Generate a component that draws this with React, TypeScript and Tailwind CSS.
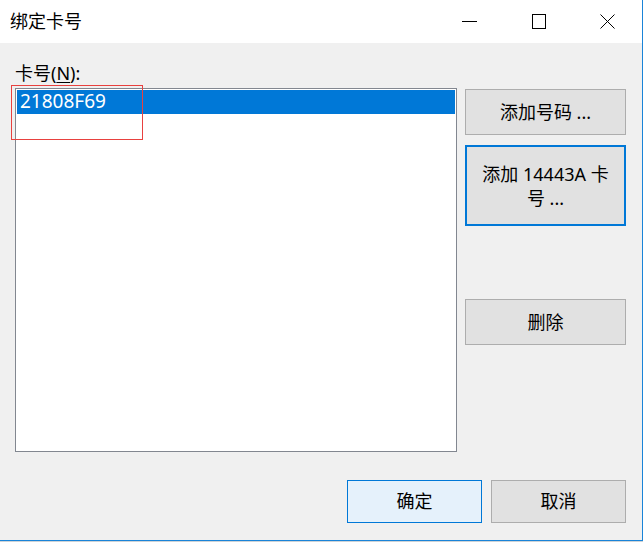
import React from 'react';

const font = "font-['Noto_Sans','Noto_Sans_CJK_SC',sans-serif]";

function CaptionButton({ kind }: { kind: 'min' | 'max' | 'close' }) {
  return (
    <div className="w-[69px] h-[43px] flex items-center justify-center">
      <svg width="15" height="15" viewBox="0 0 15 15" fill="none" stroke="#000" strokeWidth="1">
        {kind === 'min' && <line x1="0" y1="7.5" x2="15" y2="7.5" />}
        {kind === 'max' && <rect x="1.5" y="0.5" width="13" height="14" />}
        {kind === 'close' && (
          <>
            <line x1="0.5" y1="0.5" x2="14.5" y2="14.5" />
            <line x1="14.5" y1="0.5" x2="0.5" y2="14.5" />
          </>
        )}
      </svg>
    </div>
  );
}

function SideButton({ children, focused, className }: { children: React.ReactNode; focused?: boolean; className?: string }) {
  return (
    <div
      className={`w-[161px] flex items-center justify-center text-center bg-[#e1e1e1] text-black text-[18px] leading-[24px] ${
        focused ? 'border-2 border-[#0078d7]' : 'border border-[#adadad]'
      } ${className ?? ''}`}
    >
      {children}
    </div>
  );
}

export default function App() {
  return (
    <div className={`w-[643px] h-[542px] bg-[#cfd3d6] ${font}`}>
      <div className="relative w-[643px] h-[541px] bg-[#f0f0f0] border-r border-b border-[#1a84d8] flex flex-col">
        {/* title bar */}
        <div className="h-[43px] bg-white flex items-center justify-between">
          <span className="pl-[10px] text-[18px] text-black">绑定卡号</span>
          <div className="flex">
            <CaptionButton kind="min" />
            <CaptionButton kind="max" />
            <CaptionButton kind="close" />
          </div>
        </div>

        {/* body */}
        <div className="flex flex-col pt-[18px] pl-[15px] pr-[16px]">
          <div className="flex gap-[8px]">
            <div className="flex flex-col">
              <div className="h-[27px] text-[18px] leading-[24px] text-black">
                卡号(<span className="underline underline-offset-2">N</span>):
              </div>
              <div className="w-[442px] h-[364px] bg-white border border-[#828790] p-[1px]">
                <div className="h-[24px] bg-[#0078d7] text-white text-[19px] leading-[23px] pl-[3px]">21808F69</div>
              </div>
            </div>
            <div className="flex flex-col pt-[28px]">
              <SideButton className="h-[46px]">添加号码 ...</SideButton>
              <SideButton focused className="h-[81px] mt-[10px]">
                添加 14443A 卡<br />号 ...
              </SideButton>
              <SideButton className="h-[46px] mt-[73px]">删除</SideButton>
            </div>
          </div>

          <div className="flex justify-end gap-[9px] mt-[28px]">
            <div className="w-[135px] h-[43px] flex items-center justify-center bg-[#e5f1fb] border border-[#0078d7] text-[18px] text-black">
              确定
            </div>
            <div className="w-[135px] h-[43px] flex items-center justify-center bg-[#e1e1e1] border border-[#adadad] text-[18px] text-black">
              取消
            </div>
          </div>
        </div>

        {/* red annotation box */}
        <div className="absolute left-[11px] top-[85px] w-[132px] h-[55px] border border-[#e8413f]" />
      </div>
    </div>
  );
}
